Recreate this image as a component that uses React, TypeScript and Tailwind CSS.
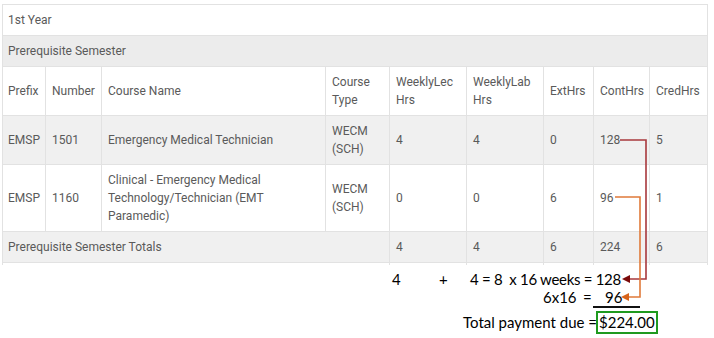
import React from 'react';

const cell = 'border border-[#e2e2e2] px-[6px] py-[6px] align-middle';

const rows = [
  {
    prefix: 'EMSP',
    number: '1501',
    name: 'Emergency Medical Technician',
    type: ['WECM', '(SCH)'],
    lec: '4',
    lab: '4',
    ext: '0',
    cont: '128',
    cred: '5',
    bg: 'bg-[#f0f0f0]',
  },
  {
    prefix: 'EMSP',
    number: '1160',
    name: 'Clinical - Emergency Medical Technology/Technician (EMT Paramedic)',
    type: ['WECM', '(SCH)'],
    lec: '0',
    lab: '0',
    ext: '6',
    cont: '96',
    cred: '1',
    bg: 'bg-white',
  },
];

const Annotations: React.FC = () => (
  <svg className="absolute left-0 top-0 pointer-events-none" width={714} height={338}>
    <polyline points="620,140 646,140 646,279 629,279" fill="none" stroke="#a8383c" strokeWidth={1.6} />
    <polygon points="622,279 630,275 630,283" fill="#7a0a0a" />
    <polyline points="615,197 640,197 640,297 628,297" fill="none" stroke="#e07a3a" strokeWidth={1.6} />
    <polygon points="621,297 629,293 629,301" fill="#d8641c" />
    <line x1={593} y1={307} x2={640} y2={307} stroke="#111" strokeWidth={2} />
  </svg>
);

export default function App() {
  return (
    <div
      className="relative w-[714px] h-[338px] bg-white overflow-hidden"
      style={{ fontFamily: 'Roboto, "Noto Sans", sans-serif' }}
    >
      <div className="ml-[2px] mt-[4px] h-[261px] w-[706px] overflow-hidden">
        <table className="table-fixed border-collapse w-[705px] text-[12px] leading-[18px] text-[#5a5a5a]">
          <colgroup>
            <col className="w-[43px]" />
            <col className="w-[56px]" />
            <col className="w-[224px]" />
            <col className="w-[64px]" />
            <col className="w-[77px]" />
            <col className="w-[77px]" />
            <col className="w-[50px]" />
            <col className="w-[56px]" />
            <col className="w-[58px]" />
          </colgroup>
          <tbody>
            <tr className="bg-white">
              <td colSpan={9} className={`${cell} pl-[5px]`}>1st Year</td>
            </tr>
            <tr className="bg-[#ececec]">
              <td colSpan={9} className={`${cell} pl-[5px]`}>Prerequisite Semester</td>
            </tr>
            <tr className="bg-white">
              <td className={`${cell} pl-[5px]`}>Prefix</td>
              <td className={cell}>Number</td>
              <td className={cell}>Course Name</td>
              <td className={cell}>Course<br />Type</td>
              <td className={cell}>WeeklyLec<br />Hrs</td>
              <td className={cell}>WeeklyLab<br />Hrs</td>
              <td className={cell}>ExtHrs</td>
              <td className={cell}>ContHrs</td>
              <td className={cell}>CredHrs</td>
            </tr>
            {rows.map((r) => (
              <tr key={r.number} className={r.bg}>
                <td className={`${cell} pl-[5px]`}>{r.prefix}</td>
                <td className={cell}>{r.number}</td>
                <td className={cell}>{r.name}</td>
                <td className={cell}>{r.type[0]}<br />{r.type[1]}</td>
                <td className={cell}>{r.lec}</td>
                <td className={cell}>{r.lab}</td>
                <td className={cell}>{r.ext}</td>
                <td className={cell}>{r.cont}</td>
                <td className={cell}>{r.cred}</td>
              </tr>
            ))}
            <tr className="bg-[#f0f0f0]">
              <td colSpan={4} className={`${cell} pl-[5px]`}>Prerequisite Semester Totals</td>
              <td className={cell}>4</td>
              <td className={cell}>4</td>
              <td className={cell}>6</td>
              <td className={cell}>224</td>
              <td className={cell}>6</td>
            </tr>
            <tr className="bg-white">
              <td colSpan={4} className={cell}>&nbsp;</td>
              <td className={cell}>&nbsp;</td>
              <td className={cell}>&nbsp;</td>
              <td className={cell}>&nbsp;</td>
              <td className={cell}>&nbsp;</td>
              <td className={cell}>&nbsp;</td>
            </tr>
          </tbody>
        </table>
      </div>

      <div
        className="pt-[5px] text-[15px] leading-[18px] text-black whitespace-pre"
        style={{ fontFamily: 'Lato, "Liberation Sans", sans-serif' }}
      >
        <div className="flex h-[18px] pl-[392px]">
          <span className="w-[47px]">4</span>
          <span className="w-[31px]">+</span>
          <span className="tracking-[-0.3px]">4 = 8  x 16 weeks = 128</span>
        </div>
        <div className="flex h-[18px] pl-[543px]">
          <span className="w-[40px]">6x16</span>
          <span className="w-[22px]">=</span>
          <span>96</span>
        </div>
        <div className="flex items-center h-[24px] mt-[4px] pl-[463px]">
          <span className="w-[133px]">Total payment due =</span>
          <span className="border-2 border-[#1f9a1f] px-[1px] leading-[19px]">$224.00</span>
        </div>
      </div>

      <Annotations />
    </div>
  );
}
